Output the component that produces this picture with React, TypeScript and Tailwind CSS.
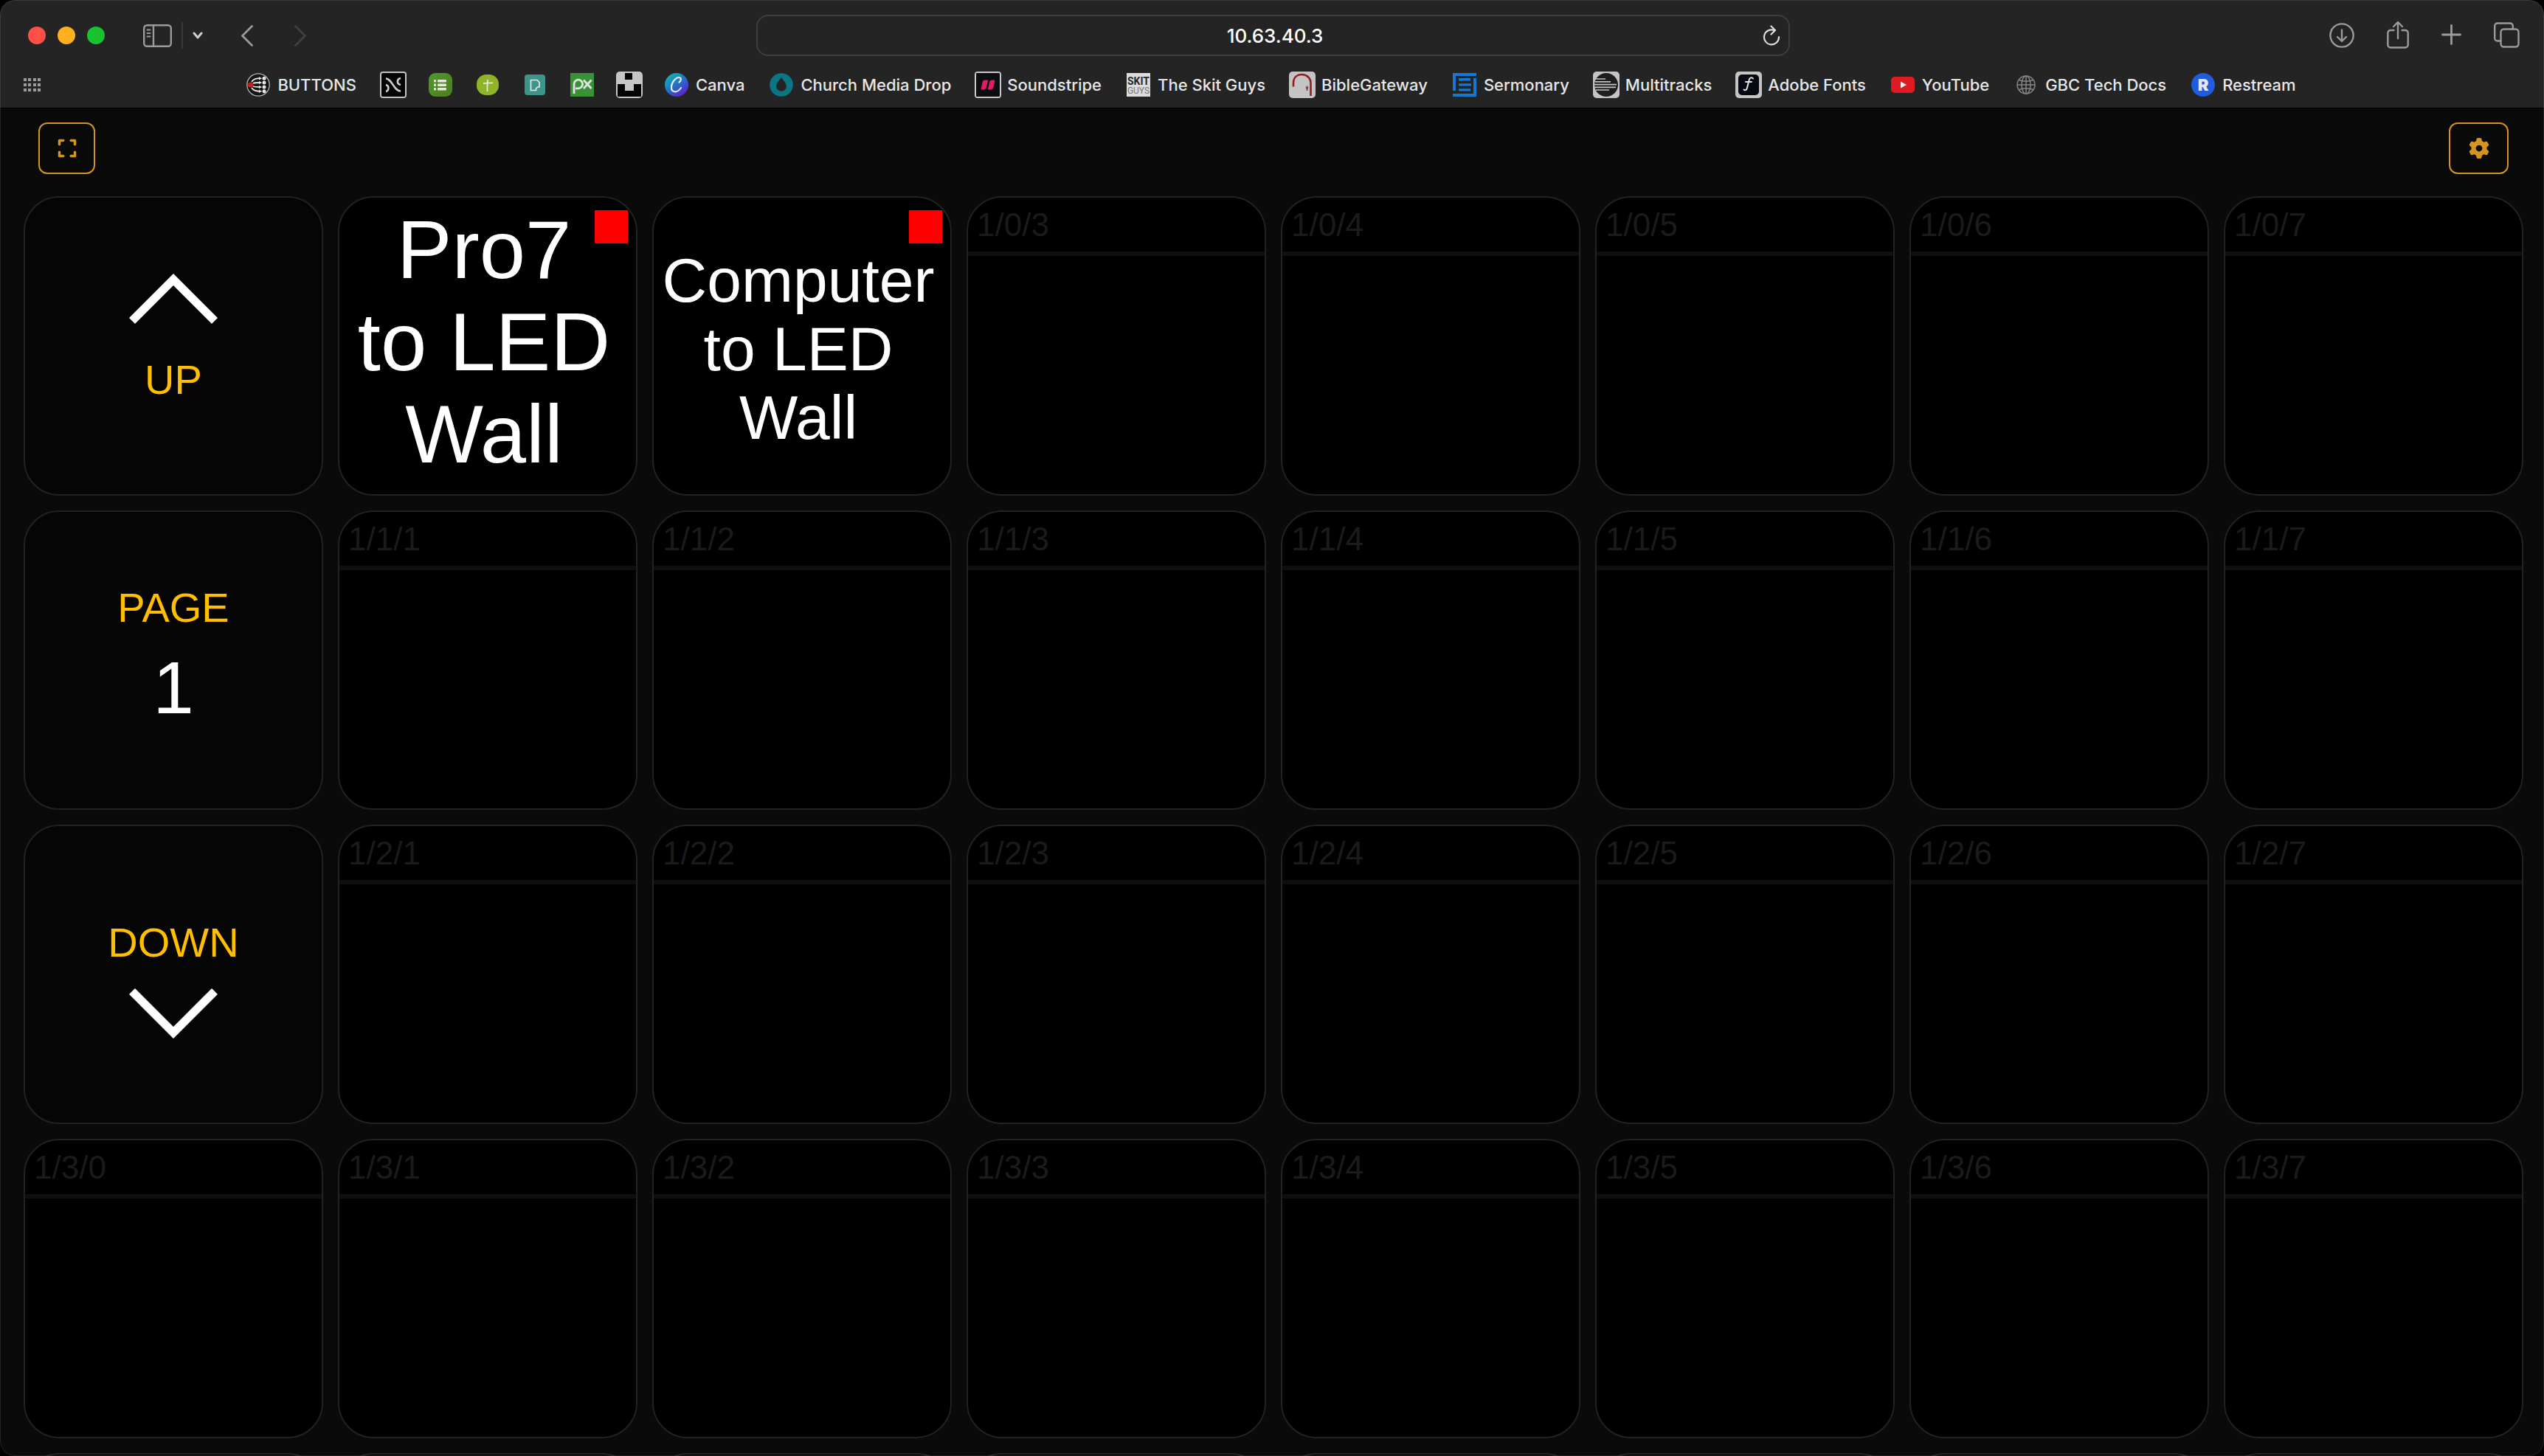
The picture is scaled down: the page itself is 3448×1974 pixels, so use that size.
import type { ReactNode } from "react";
import { FaExpand, FaGear } from "react-icons/fa6";

const SANS = "font-['Inter','Liberation_Sans',sans-serif]";
const DECK = "font-['Liberation_Sans',Arial,sans-serif]";

/* ---------- favicons ---------- */

function CompanionIcon() {
  return (
    <svg viewBox="0 0 32 32" className="size-8" aria-hidden="true">
      <circle cx="16" cy="16" r="15.2" fill="#141414" stroke="#b4b4b4" strokeWidth="1.3" />
      <g stroke="#e6e6e6" strokeWidth="1.8" fill="none">
        <path d="M7 12C9 8.500 12 7.200 19 7.200" />
        <path d="M9 14C11 13 13 13 19 13" />
        <path d="M9 18C11 19 13 19 19 19" />
        <path d="M7 20C9 23.500 12 24.800 19 24.800" />
      </g>
      <g fill="#e6e6e6">
        <path d="M17 5l4 2.200-4 2.200zM17 10.800l4 2.200-4 2.200zM17 16.800l4 2.200-4 2.200zM17 22.600l4 2.200-4 2.200z" />
        <circle cx="24" cy="7.200" r="2.500" />
        <circle cx="24" cy="13" r="2.500" />
        <circle cx="24" cy="19" r="2.500" />
        <circle cx="24" cy="24.800" r="2.500" />
      </g>
      <circle cx="5.500" cy="16" r="3.600" fill="#c4201c" />
    </svg>
  );
}

function StudioIcon() {
  return (
    <svg viewBox="0 0 36 36" className="size-9" aria-hidden="true">
      <rect width="36" height="36" rx="4" fill="#c4c4c4" />
      <rect x="2" y="2" width="32" height="32" rx="1.500" fill="#050505" />
      <g fill="none" stroke="#cfcfcf" strokeWidth="2.600">
        <path d="M8 9.500C16 9.500 19 26.500 28 26.500" />
        <path d="M28 9C22.500 10 22.500 17 28 18" />
        <path d="M8 18C12.500 19 12.500 26 8 27" />
      </g>
    </svg>
  );
}

function PlanningListIcon() {
  return (
    <svg viewBox="0 0 32 32" className="size-8" aria-hidden="true">
      <defs>
        <linearGradient id="listGreen" x1="0" y1="0" x2="1" y2="1">
          <stop offset="0" stopColor="#4f9a2c" />
          <stop offset="1" stopColor="#4c7c1e" />
        </linearGradient>
      </defs>
      <rect width="32" height="32" rx="9" fill="url(#listGreen)" />
      <g fill="#e8e8e0">
        <rect x="7" y="9" width="3" height="3.400" rx="1" />
        <rect x="7" y="14.600" width="3" height="3.400" rx="1" />
        <rect x="7" y="20" width="3" height="3.400" rx="1" />
        <rect x="12" y="9" width="12" height="3.400" rx="1" />
        <rect x="12" y="14.600" width="12" height="3.400" rx="1" />
        <rect x="12" y="20" width="12" height="3.400" rx="1" />
      </g>
    </svg>
  );
}

function CrossIcon() {
  return (
    <svg viewBox="0 0 30 30" className="size-[30px]" aria-hidden="true">
      <rect x="0" y="1" width="30" height="28" rx="13" fill="#8fb428" />
      <path d="M15 8C14.500 13 14.500 18 14.500 24M9 13C13 12.300 17 12.300 22 12.300" stroke="#e6ebd2" strokeWidth="1.800" fill="none" />
    </svg>
  );
}

function PlaceItIcon() {
  return (
    <svg viewBox="0 0 28 28" className="size-7" aria-hidden="true">
      <rect width="28" height="28" rx="4" fill="#3d9489" />
      <path
        d="M8.500 7.500h8.500l3 3v6.500h-2.500l-2 2v2.500h-7z"
        fill="none"
        stroke="#dfe9e7"
        strokeWidth="1.700"
      />
    </svg>
  );
}

function PexelsIcon() {
  return (
    <svg viewBox="0 0 32 32" className="size-8" aria-hidden="true">
      <rect width="32" height="32" fill="#3a9138" />
      <g fill="none" stroke="#dde8dc" strokeWidth="2.800">
        <path d="M5 28V15a5.800 5.800 0 1 1 5.800 5.800H7" />
        <path d="M18 9.500L28.500 21M28.500 9.500L18 21" />
      </g>
    </svg>
  );
}

function UnsplashIcon() {
  return (
    <svg viewBox="0 0 36 36" className="size-9" aria-hidden="true">
      <rect width="36" height="36" rx="5" fill="#c6c6c6" />
      <path d="M12 2h10v9H12zM2 17h10v9h12v-9h10v17H2z" fill="#040404" />
    </svg>
  );
}

function CanvaIcon() {
  return (
    <svg viewBox="0 0 32 32" className="size-8" aria-hidden="true">
      <defs>
        <linearGradient id="canvaBlue" x1="0.100" y1="0.100" x2="0.750" y2="0.950">
          <stop offset="0" stopColor="#0fb6b4" />
          <stop offset="0.500" stopColor="#2472c4" />
          <stop offset="1" stopColor="#5b22d4" />
        </linearGradient>
      </defs>
      <circle cx="16" cy="16" r="16" fill="url(#canvaBlue)" />
      <path
        d="M19.500 12.500c2.500-1.800 3.300-5.500.8-6.300-4.300-1.400-10.800 5.300-11.300 12.300-.5 8 7.500 9.500 13 1.500"
        fill="none"
        stroke="#e4eaf2"
        strokeWidth="2.200"
        strokeLinecap="round"
      />
    </svg>
  );
}

function DropIcon() {
  return (
    <svg viewBox="0 0 32 32" className="size-8" aria-hidden="true">
      <circle cx="16" cy="16" r="15.800" fill="#0b7683" />
      <path d="M16 6c3.800 5 6.800 8.300 6.800 12a6.800 6.800 0 0 1-13.600 0c0-3.700 3-7 6.800-12z" fill="#242424" />
    </svg>
  );
}

function SoundstripeIcon() {
  return (
    <svg viewBox="0 0 36 36" className="size-9" aria-hidden="true">
      <rect width="36" height="36" rx="4" fill="#c8c8c8" />
      <rect x="2" y="2" width="32" height="32" rx="1" fill="#0b0d10" />
      <path
        d="M13 12h4.500l-2 9c-.5 2-1.300 3-2.500 3H9l2-9c.4-2 1-3 2-3zM22.500 12H27l-2 9c-.5 2-1.300 3-2.500 3h-4l2-9c.4-2 1-3 2-3z"
        fill="#e21c62"
        stroke="#e21c62"
        strokeLinejoin="round"
      />
    </svg>
  );
}

function SkitGuysIcon() {
  return (
    <svg viewBox="0 0 32 32" className="size-8" aria-hidden="true">
      <rect width="32" height="32" fill="#dcdcdc" />
      <text x="16" y="16" textAnchor="middle" className="fill-[#26262e] font-['Roboto',sans-serif] text-[14px] font-bold">
        SKIT
      </text>
      <text x="16" y="28" textAnchor="middle" className="fill-[#77777c] font-['Roboto',sans-serif] text-[12px]">
        GUYS
      </text>
    </svg>
  );
}

function BibleGatewayIcon() {
  return (
    <svg viewBox="0 0 36 36" className="size-9" aria-hidden="true">
      <rect width="36" height="36" rx="5" fill="#c4c4c4" />
      <path d="M6 20.500V16C6 8 11 4 17.500 4S29.500 8.500 29.500 16v17" fill="none" stroke="#8f1f1f" strokeWidth="2.600" />
      <path d="M24.500 19.500v6.500M22.800 22h3.400" stroke="#8f1f1f" strokeWidth="1.500" />
    </svg>
  );
}

function SermonaryIcon() {
  return (
    <svg viewBox="0 0 32 32" className="size-8" aria-hidden="true">
      <path
        d="M0 0h32v4H4v20H0zM28 7h4v25H0v-4h28zM8 7h16v3.400H8zM8 14.200h17v3.400H8zM8 21.200h16v3.400H8z"
        fill="#1478d4"
      />
    </svg>
  );
}

function MultitracksIcon() {
  return (
    <svg viewBox="0 0 36 36" className="size-9" aria-hidden="true">
      <rect width="36" height="36" rx="5" fill="#c4c4c4" />
      <circle cx="18" cy="18" r="16" fill="#1e1e1e" />
      <g stroke="#c4c4c4" strokeWidth="1.700">
        <path d="M3 10h14M3 13.800h21M2 17.600h30M2 21.400h29M4 25h18" />
      </g>
    </svg>
  );
}

function AdobeFontsIcon() {
  return (
    <svg viewBox="0 0 36 36" className="size-9" aria-hidden="true">
      <rect width="36" height="36" rx="5" fill="#c4c4c4" />
      <rect x="4" y="4" width="28" height="28" rx="5" fill="#060912" />
      <path
        d="M24 9.500c-2-2.500-4.600-1.300-5.500 2.500l-2.500 10c-.8 3-2.600 4.200-4.500 2.500M14 14h8"
        fill="none"
        stroke="#e4e4e4"
        strokeWidth="2"
        strokeLinecap="round"
      />
    </svg>
  );
}

function YouTubeIcon() {
  return (
    <svg viewBox="0 0 32 32" className="size-8" aria-hidden="true">
      <rect y="5" width="32" height="22" rx="5" fill="#de1b22" />
      <path d="M13 11.500v9l8-4.500z" fill="#ececec" />
    </svg>
  );
}

function GlobeIcon() {
  return (
    <svg viewBox="0 0 26 26" className="size-[26px]" fill="none" stroke="#858585" strokeWidth="1.500" aria-hidden="true">
      <circle cx="13" cy="13" r="12" />
      <ellipse cx="13" cy="13" rx="6" ry="12" />
      <path d="M13 1v24M1 13h24M3.500 6.500c5 2.300 14 2.300 19 0M3.500 19.500c5-2.300 14-2.300 19 0" />
    </svg>
  );
}

function RestreamIcon() {
  return (
    <span className="flex size-8 items-center justify-center rounded-full bg-[#1f5ce0] text-[22px] leading-8 font-black text-[#e4e8f2]">
      R
    </span>
  );
}

/* ---------- toolbar glyphs ---------- */

const stroke = { fill: "none", stroke: "#9b9b9b", strokeWidth: 2.4, strokeLinecap: "round", strokeLinejoin: "round" } as const;

function IconButton({ label, children }: { label: string; children: ReactNode }) {
  return (
    <button type="button" aria-label={label} className="flex shrink-0 items-center justify-center">
      {children}
    </button>
  );
}

function Toolbar() {
  return (
    <div className="grid h-14 grid-cols-[1025fr_1401fr_1022fr] items-center">
      <div className="flex items-center pl-[38px]">
        <div className="flex gap-4">
          <button type="button" aria-label="Close" className="size-6 rounded-full bg-[#ff5048]" />
          <button type="button" aria-label="Minimise" className="size-6 rounded-full bg-[#ffb01f]" />
          <button type="button" aria-label="Zoom" className="size-6 rounded-full bg-[#18c32f]" />
        </div>
        <div className="ml-[52px] flex items-center gap-[13px]">
          <IconButton label="Show sidebar">
            <svg viewBox="0 0 39 31" className="h-[31px] w-[39px]" {...stroke}>
              <rect x="1.200" y="1.200" width="36.600" height="28.600" rx="4" />
              <path d="M14 1.500v28" />
              <path d="M5.500 7.500h4M5.500 12h4M5.500 16.500h4" strokeWidth="1.800" />
            </svg>
          </IconButton>
          <span className="h-9 w-0.5 bg-[#383838]" />
          <IconButton label="Tab groups">
            <svg viewBox="0 0 14 10" className="h-2.5 w-3.5" {...stroke} stroke="#cfcfcf" strokeWidth="3">
              <path d="M2 2l5 6 5-6" />
            </svg>
          </IconButton>
        </div>
        <div className="ml-[52px] flex items-center gap-14">
          <IconButton label="Back">
            <svg viewBox="0 0 16 29" className="h-[29px] w-4" {...stroke} strokeWidth="2.800">
              <path d="M14.500 1.500L1.500 14.500l13 13" />
            </svg>
          </IconButton>
          <IconButton label="Forward">
            <svg viewBox="0 0 16 29" className="h-[29px] w-4" {...stroke} stroke="#414141" strokeWidth="2.800">
              <path d="M1.500 1.500l13 13-13 13" />
            </svg>
          </IconButton>
        </div>
      </div>

      <form className="flex h-14 items-center rounded-2xl border-2 border-[#3e3e3e] pr-[11px] pl-10" onSubmit={(e) => e.preventDefault()}>
        <input
          aria-label="Address"
          defaultValue="10.63.40.3"
          className="h-full min-w-0 flex-1 bg-transparent text-center text-[26px] font-medium text-white outline-none"
        />
        <IconButton label="Reload">
          <svg viewBox="0 0 24 28" className="h-7 w-6" {...stroke} stroke="#dedede" strokeWidth="2.200">
            <path d="M16 7.200A10 10 0 1 0 22 16" />
            <path d="M11.500 1.500l5.500 5.500-5.500 5.500" />
          </svg>
        </IconButton>
      </form>

      <div className="flex items-center justify-end gap-11 pr-[33px]">
        <IconButton label="Downloads">
          <svg viewBox="0 0 34 34" className="size-[34px]" {...stroke}>
            <circle cx="17" cy="17" r="15.600" />
            <path d="M17 9.500v15M11 19l6 6 6-6" />
          </svg>
        </IconButton>
        <IconButton label="Share">
          <svg viewBox="0 0 30 42" className="h-[42px] w-[30px]" {...stroke}>
            <path d="M9.500 14H5a3.700 3.700 0 0 0-3.700 3.700V34A3.700 3.700 0 0 0 5 37.500h20a3.700 3.700 0 0 0 3.700-3.500V17.700A3.700 3.700 0 0 0 25 14h-4.500" />
            <path d="M15 25V3M9 9l6-6 6 6" />
          </svg>
        </IconButton>
        <IconButton label="New tab">
          <svg viewBox="0 0 27 30" className="h-[30px] w-[27px]" {...stroke} strokeWidth="2.800">
            <path d="M13.500 1.500v25M1.500 14h24" />
          </svg>
        </IconButton>
        <IconButton label="Show all tabs">
          <svg viewBox="0 0 35 36" className="h-9 w-[35px]" {...stroke}>
            <rect x="9.500" y="9.500" width="24" height="24" rx="4" />
            <path d="M9 25.500H5a3.800 3.800 0 0 1-3.800-3.800V5.200A3.800 3.800 0 0 1 5 1.500h17a3.800 3.800 0 0 1 3.800 3.700v4" />
          </svg>
        </IconButton>
      </div>
    </div>
  );
}

/* ---------- favourites bar ---------- */

const bookmarks: { name: string; icon: ReactNode; iconOnly?: boolean }[] = [
  { name: "BUTTONS", icon: <CompanionIcon /> },
  { name: "Studio", icon: <StudioIcon />, iconOnly: true },
  { name: "Planning", icon: <PlanningListIcon />, iconOnly: true },
  { name: "Church", icon: <CrossIcon />, iconOnly: true },
  { name: "Placeit", icon: <PlaceItIcon />, iconOnly: true },
  { name: "Pexels", icon: <PexelsIcon />, iconOnly: true },
  { name: "Unsplash", icon: <UnsplashIcon />, iconOnly: true },
  { name: "Canva", icon: <CanvaIcon /> },
  { name: "Church Media Drop", icon: <DropIcon /> },
  { name: "Soundstripe", icon: <SoundstripeIcon /> },
  { name: "The Skit Guys", icon: <SkitGuysIcon /> },
  { name: "BibleGateway", icon: <BibleGatewayIcon /> },
  { name: "Sermonary", icon: <SermonaryIcon /> },
  { name: "Multitracks", icon: <MultitracksIcon /> },
  { name: "Adobe Fonts", icon: <AdobeFontsIcon /> },
  { name: "YouTube", icon: <YouTubeIcon /> },
  { name: "GBC Tech Docs", icon: <GlobeIcon /> },
  { name: "Restream", icon: <RestreamIcon /> },
];

function FavouritesBar() {
  return (
    <nav aria-label="Favourites" className="mt-[21px] flex h-9 items-center px-8">
      <div className="flex-1">
        <button type="button" aria-label="Start page" className="block">
          <svg viewBox="0 0 24 18" className="h-[18px] w-6" fill="#9b9b9b">
            {[0, 7, 14].map((y) =>
              [0, 6, 13, 19].map((x) => <rect key={`${x}-${y}`} x={x} y={y} width="4" height="4" />),
            )}
          </svg>
        </button>
      </div>
      <div className="flex items-center gap-7">
        {bookmarks.map((b) => (
          <a key={b.name} href="#" aria-label={b.name} className="flex items-center gap-2">
            <span className="flex size-9 shrink-0 items-center justify-center">{b.icon}</span>
            {!b.iconOnly && (
              <span className="pr-1 text-[22px] leading-7 font-medium whitespace-nowrap text-[#e6e6e6]">{b.name}</span>
            )}
          </a>
        ))}
      </div>
      <div className="flex-1" />
    </nav>
  );
}

/* ---------- button deck ---------- */

const KEY = "relative flex aspect-square flex-col items-center overflow-hidden rounded-[48px] border-2 border-[#222222]";

function Chevron({ down }: { down?: boolean }) {
  return (
    <svg viewBox="0 0 120 68" className="h-[68px] w-[120px]" fill="none" stroke="#fff" strokeWidth="11.300" aria-hidden="true">
      {down ? <path d="M4 4l56 56 56-56" /> : <path d="M4 64L60 8l56 56" />}
    </svg>
  );
}

function EmptyKey({ id, label }: { id: string; label?: string }) {
  return (
    <button type="button" aria-label={`Button ${id}`} className={`${KEY} bg-black`}>
      <span className="block h-[79px] w-full border-b-6 border-[#0e0e0e] pt-3.5 pl-3 text-left text-[44px] leading-[46px] text-[#1b1b1b]">
        {label}
      </span>
    </button>
  );
}

function Key({ row, col }: { row: number; col: number }) {
  const id = `1/${row}/${col}`;
  if (id === "1/0/0")
    return (
      <button type="button" className={`${KEY} gap-12 bg-[#050505] pt-[103px]`}>
        <Chevron />
        <span className="text-[56px] leading-[56px] text-[#ffbe00]">UP</span>
      </button>
    );
  if (id === "1/1/0")
    return (
      <button type="button" className={`${KEY} gap-[30px] bg-[#050505] pt-[102px]`}>
        <span className="text-[56px] leading-[56px] text-[#ffbe00]">PAGE</span>
        <span className="text-[100px] leading-[100px] text-white">1</span>
      </button>
    );
  if (id === "1/2/0")
    return (
      <button type="button" className={`${KEY} gap-[34px] bg-[#050505] pt-[130px]`}>
        <span className="text-[56px] leading-[56px] text-[#ffbe00]">DOWN</span>
        <Chevron down />
      </button>
    );
  if (id === "1/0/1")
    return (
      <button type="button" className={`${KEY} justify-center bg-black pr-2.5 pb-3 text-[112px] leading-[125px] text-white`}>
        <span>Pro7</span>
        <span>to LED</span>
        <span>Wall</span>
        <span className="absolute top-[17px] right-[11px] size-[45px] bg-[#ff0000]" />
      </button>
    );
  if (id === "1/0/2")
    return (
      <button type="button" className={`${KEY} justify-center bg-black pt-2 pr-2.5 text-[84px] leading-[93px] text-white`}>
        <span>Computer</span>
        <span>to LED</span>
        <span>Wall</span>
        <span className="absolute top-[17px] right-[11px] size-[45px] bg-[#ff0000]" />
      </button>
    );
  return <EmptyKey id={id} label={row < 4 ? id : undefined} />;
}

export default function App() {
  return (
    <div className="bg-black">
      <div className={`relative flex h-screen flex-col overflow-hidden rounded-[20px] bg-[#0a0a0a] ${SANS}`}>
        <header className="h-[147px] shrink-0 border-b border-black bg-[#242424] pt-5">
          <Toolbar />
          <FavouritesBar />
        </header>

        <main className={`flex-1 overflow-hidden ${DECK}`}>
          <div className="flex items-center justify-between pt-[19px] pr-12 pl-[52px] text-[28px] text-[#d3951d]">
            <button
              type="button"
              aria-label="Full screen"
              className="flex h-[70px] w-[77px] items-center justify-center rounded-xl border-2 border-[#d3951d]"
            >
              <FaExpand />
            </button>
            <button
              type="button"
              aria-label="Settings"
              className="flex h-[70px] w-[81px] items-center justify-center rounded-xl border-2 border-[#d3951d]"
            >
              <FaGear />
            </button>
          </div>

          <div className="mt-[30px] grid grid-cols-8 gap-5 pr-7 pl-8">
            {[0, 1, 2, 3, 4].map((row) =>
              [0, 1, 2, 3, 4, 5, 6, 7].map((col) => <Key key={`${row}-${col}`} row={row} col={col} />),
            )}
          </div>
        </main>

        <div className="pointer-events-none absolute inset-0 rounded-[20px] border border-white/10" />
      </div>
    </div>
  );
}
